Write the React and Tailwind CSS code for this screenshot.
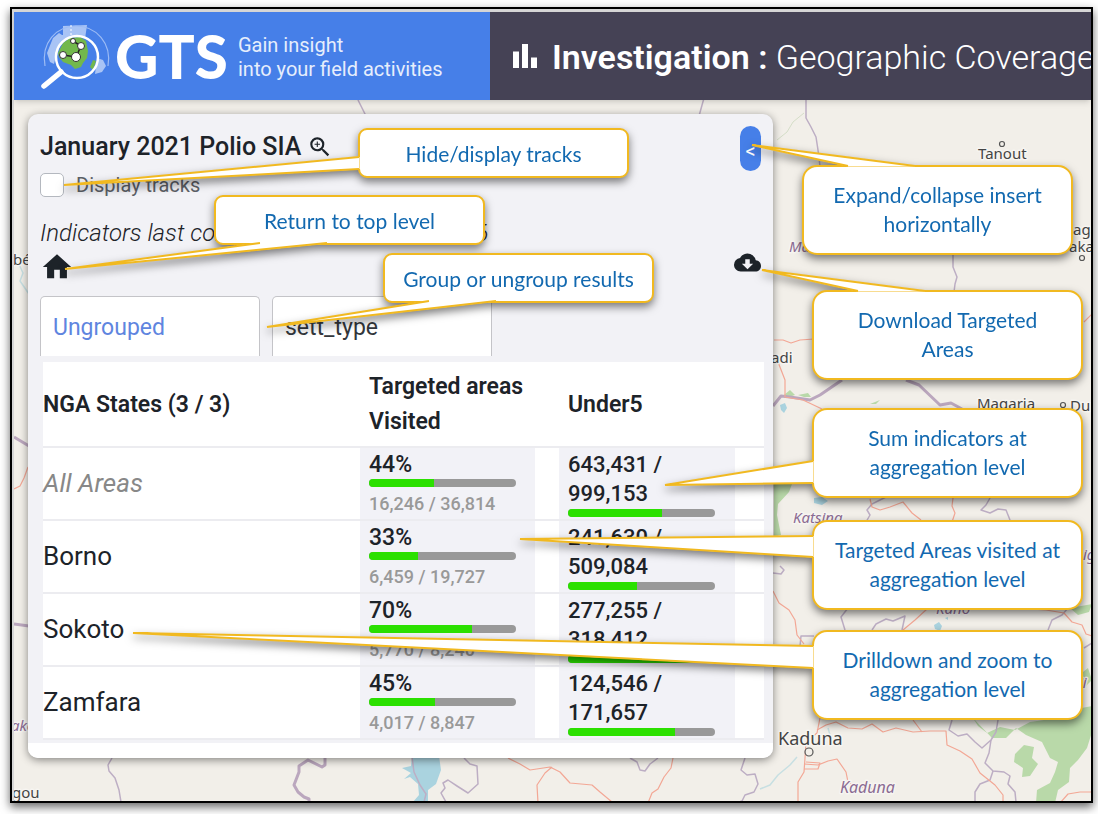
import clsx from "clsx";
import { MdBarChart, MdCloudDownload, MdHome, MdZoomIn } from "react-icons/md";

const rows = [
  { name: "All Areas", percent: 44, visited: "16,246", target: "36,814", under5: "643,431", total: "999,153", summary: true },
  { name: "Borno", percent: 33, visited: "6,459", target: "19,727", under5: "241,630", total: "509,084" },
  { name: "Sokoto", percent: 70, visited: "5,770", target: "8,240", under5: "277,255", total: "318,412" },
  { name: "Zamfara", percent: 45, visited: "4,017", target: "8,847", under5: "124,546", total: "171,657" },
];

// x / y is the corner of the box, tail is [base, tip, base] measured from that corner
const callouts = [
  { x: 358, y: 128, lines: ["Hide/display tracks"], tail: [[1, 29], [-294, 57], [1, 41]] },
  { x: 214, y: 195, lines: ["Return to top level"], tail: [[46, 48], [-149, 74], [113, 48]] },
  { x: 383, y: 253, lines: ["Group or ungroup results"], tail: [[46, 48], [-116, 74], [113, 48]] },
  { x: 802, y: 165, lines: ["Expand/collapse insert", "horizontally"], tail: [[46, 1], [-50, -20], [113, 1]] },
  { x: 812, y: 290, lines: ["Download Targeted", "Areas"], tail: [[46, 1], [-50, -20], [113, 1]] },
  { x: 812, y: 408, lines: ["Sum indicators at", "aggregation level"], tail: [[1, 53], [-147, 77], [1, 75]] },
  { x: 812, y: 520, lines: ["Targeted Areas visited at", "aggregation level"], tail: [[1, 16], [-292, 19], [1, 37]] },
  { x: 812, y: 630, lines: ["Drilldown and zoom to", "aggregation level"], tail: [[1, 16], [-679, 3], [1, 38]] },
];

const borders = [
  "358,100 366,116",
  "704,98 699,116",
  "806,98 806,118 811,127 816,137 818,150 820,166",
  "953,255 953,267 957,277 955,284 954,292",
  "866,522 870,515 867,510 872,504 886,497",
  "990,498 986,505 981,510 990,513 998,509 1006,510 1010,520",
  "773,573 781,574 784,570 780,566",
  "800,646 801,636 814,636",
  "848,608 841,617 845,630",
  "872,630 876,624 886,619 893,621 905,616 902,630",
  "1068,608 1062,615 1052,620 1048,630",
  "1084,648 1092,643",
  "952,720 949,730 958,736 967,734 975,742 982,748 991,740 996,732 998,720",
  "991,740 989,753 985,763 993,771 1004,772 1010,776 1008,784 1015,792 1016,802",
  "993,771 990,780 980,784 975,792 975,802",
  "412,757 414,772 420,785 426,794 424,802",
  "464,758 470,764 477,766 478,784 468,793 457,786 448,780 443,783 445,788 441,793 446,802",
  "630,758 637,762 640,770 645,771 650,764 658,758",
  "745,758 741,770 747,775 755,774 758,784 754,792 745,795 742,801 736,803",
  "112,758 108,765 109,771 115,778 119,790 121,802",
];

const thickBorders = [
  "773,406 781,396 790,397 810,400 820,395 842,380",
  "906,380 919,385 940,405 951,403 962,409",
  "325,758 325,765 322,767 308,760 299,766 299,772 294,785 298,792 304,797 309,799 309,803",
  "14,437 29,446",
  "14,624 29,626",
];

const roads = [
  "774,340 783,340 791,343 800,340 814,339",
  "778,362 785,380 785,397 803,400 822,409",
  "870,499 872,507 880,510 890,507 903,502 912,513 921,520",
  "953,498 952,506 955,513 952,522",
  "773,591 779,603 789,610 795,620 797,635 804,644",
  "927,609 915,620 903,630",
  "1030,609 1046,610 1064,613 1072,622 1082,625 1086,634 1092,636",
  "820,718 817,733 806,742 805,758 804,772 798,782 798,802",
  "817,730 826,725 836,722 848,728 862,729 872,724 883,732 896,728 913,732 930,731 946,731 947,745 960,751 972,759 980,773 995,785 1003,795 1003,803",
  "913,720 922,732",
  "804,764 818,765 828,761 837,759 846,772 848,782 858,788 870,787 875,793",
  "806,762 820,763 818,769 804,769",
  "508,758 520,764 530,770 550,767 560,772 570,783 592,785 600,792 612,802",
  "552,767 545,773 537,785 538,803",
  "673,758 671,768 664,777 658,789 652,793 648,803",
  "1060,803 1068,794 1080,792 1092,792",
  "28,467 24,478 20,486 14,489",
  "1084,322 1092,314",
];

const forests = [
  "774,482 792,484 789,492 778,504 777,515 781,535 774,537",
  "973,718 978,726 987,733 1000,727 1015,730 1030,722 1044,720 1060,712 1092,706 1092,732 1087,748 1078,760 1070,768 1069,782 1058,790 1055,803 1036,803 1037,790 1050,783 1055,772 1058,762 1050,758 1047,752 1042,742 1026,735 1016,728 1006,738 992,738",
  "1015,754 1024,745 1034,747 1032,758 1038,764 1030,776 1022,777 1023,768 1014,762",
  "1070,608 1092,604 1089,612 1078,615",
  "1083,672 1088,668 1092,680 1084,688",
  "784,395 790,390 795,395 789,397",
  "798,395 808,393 811,397 804,397",
  "870,404 880,400 876,404",
];

function Lines({ points, ...props }) {
  return (
    <g fill="none" strokeLinejoin="round" {...props}>
      {points.map((p) => (
        <polyline key={p} points={p} />
      ))}
    </g>
  );
}

function MapBackground() {
  return (
    <svg className="absolute inset-0 h-full w-full" aria-hidden="true">
      <g transform="translate(-14 -100)">
        <g fill="#b9d9a9">
          {forests.map((p) => (
            <polygon key={p} points={p} />
          ))}
        </g>
        <g fill="#aad3df">
          <path d="M412 756H439L441 770L436 784L428 790L428 802H413L419 795L418 784L410 777L404 779L411 773L402 768L411 766Z" />
          <path d="M780 405l5-2 2 5-3 5-3-3z" />
          <path d="M814 498l8-1 6 4-6 4-8-2z" />
          <path d="M934 625l5-3 3 4-2 5-5-2zM945 618l3-1 0 3z" />
        </g>
        <Lines points={["18,262 23,273 20,281 29,294", "760,789 770,785 778,775 790,765 797,757", "828,728 830,735"]} stroke="#c7dfe2" strokeWidth="1.5" />
        <Lines points={["777,140 787,132 793,122 804,113"]} stroke="#d5dec8" />
        <Lines points={borders} stroke="#bdaec4" strokeWidth="1.5" />
        <Lines points={thickBorders} stroke="#bba7be" strokeWidth="3" />
        <Lines points={roads} stroke="#f3a795" strokeWidth="1.2" />
        <g fill="#f2efe9" stroke="#555" strokeWidth="1.2">
          <circle cx="1002" cy="144" r="2.5" />
          <circle cx="1082" cy="258" r="2.5" />
          <circle cx="1063" cy="405" r="2.5" />
          <circle cx="809" cy="752" r="4" />
        </g>
        <g
          fill="#444"
          stroke="#f7f5f1"
          strokeWidth="3"
          strokeLinejoin="round"
          className="font-['Noto_Sans',sans-serif] text-[15px] [paint-order:stroke]"
        >
          <text x="978" y="159">Tanout</text>
          <text x="1073" y="235">aga</text>
          <text x="1069" y="252">aka</text>
          <text x="771" y="363">adi</text>
          <text x="977" y="409">Magaria</text>
          <text x="1070" y="411">Dun</text>
          <text x="778" y="745" className="text-[18px]">Kaduna</text>
          <text x="12" y="798">gou</text>
          <text x="13" y="265">bé</text>
        </g>
        <g
          fill="#8b6b93"
          stroke="#f7f5f1"
          strokeWidth="3"
          strokeLinejoin="round"
          className="font-['Noto_Sans',sans-serif] text-[15px] italic [paint-order:stroke]"
        >
          <text x="789" y="252">Ma</text>
          <text x="793" y="523">Katsina</text>
          <text x="936" y="614">Kano</text>
          <text x="1083" y="560">ig</text>
          <text x="840" y="793" className="text-[16px]">Kaduna</text>
          <text x="11" y="731">ako</text>
          <text x="1079" y="688">ji</text>
        </g>
      </g>
    </svg>
  );
}

function Logo() {
  return (
    <svg width="72" height="66" viewBox="0 0 72 66" fill="none" aria-hidden="true">
      <path d="M12 15l6-5 3 2 8-2 0 8-8 4-2 8-4 3-2 8-4-2-3-9zM22 3l24-1-2 14-10-3-12 1z" fill="#a9c4f5" />
      <path d="M56 35l6 2 3 6-4 6-7 2z" fill="#a9c4f5" />
      <path d="M4 43C0 20 15 3 35 3s36 17 32 40" stroke="#9dbcf5" strokeWidth="1.2" />
      <path d="M30 2v12" stroke="#fff" strokeDasharray="2 2" />
      <circle cx="36" cy="34" r="20" fill="#467fe8" />
      <path d="M17 30l5-10 7-5 10-1 6 4 2 10-1 7-4 5-2 4-6 2-4-4-8-3-4-5z" fill="#72b84c" />
      <path d="M52 37l3 1-3 9-3-3z" fill="#72b84c" />
      <circle cx="36" cy="34" r="21" stroke="#fff" strokeWidth="2.5" />
      <path d="M20 49L3 63" stroke="#fff" strokeWidth="5.5" strokeLinecap="round" />
      <path d="M32 18l8 5-5 11-13-2" stroke="#222" strokeWidth="1.5" />
      <g fill="#fff" stroke="#333">
        <circle cx="32" cy="18" r="2.5" />
        <circle cx="40" cy="23" r="3.5" />
        <circle cx="22" cy="32" r="3.5" />
        <circle cx="35" cy="34" r="4.5" />
      </g>
    </svg>
  );
}

function Header() {
  return (
    <header className="relative z-10 flex h-[88px] text-white shadow-md">
      <div className="flex w-[476px] shrink-0 items-center bg-[#467fe8] pl-[27px]">
        <Logo />
        <span className="ml-[2px] w-[123px] font-['Lato',sans-serif] text-[60px] leading-none font-black">GTS</span>
        <p className="pt-[2px] text-[20px] leading-[24px] whitespace-nowrap text-[#e6eefc]">
          Gain insight
          <br />
          into your field activities
        </p>
      </div>
      <div className="flex min-w-0 flex-1 items-center overflow-hidden bg-[#454255] pl-[17px]">
        <MdBarChart size={36} className="shrink-0" />
        <h1 className="ml-[9px] pt-[2px] text-[34px] leading-none font-light whitespace-nowrap">
          <span className="font-semibold">Investigation :</span> Geographic Coverage
        </h1>
      </div>
    </header>
  );
}

function Bar({ label, value }) {
  return (
    <div role="progressbar" aria-label={label} aria-valuenow={value} className="h-2 w-[147px] overflow-hidden rounded-full bg-[#999]">
      <div className="h-full bg-[#2be000]" style={{ width: `${value}%` }} />
    </div>
  );
}

const toNumber = (s) => Number(s.replace(",", ""));

function ResultsTable() {
  return (
    <div className="ml-[15px] mr-[9px] mt-[6px] bg-white">
      <table className="w-full table-fixed border-collapse text-left text-[#1d2329]">
        <colgroup>
          <col />
          <col className="w-[199px]" />
          <col className="w-[205px]" />
        </colgroup>
        <thead>
          <tr className="h-[85px] border-b-2 border-[#ececf0] text-[23px] leading-[35px]">
            <th className="font-semibold">NGA States (3 / 3)</th>
            <th className="pl-[9px] font-semibold">Targeted areas Visited</th>
            <th className="pl-[9px] font-semibold">Under5</th>
          </tr>
        </thead>
        <tbody>
          {rows.map((row) => (
            <tr key={row.name} className="border-b-2 border-[#ececf0]">
              <td className={clsx("text-[26px]", row.summary && "text-[#888] italic")}>{row.name}</td>
              <td className="pr-6">
                <div className="h-[71px] bg-[#f2f2f7] pl-[9px]">
                  <p className="pt-[2px] text-[23px] leading-[29px] font-medium">{row.percent}%</p>
                  <Bar label={`${row.name} targeted areas visited`} value={row.percent} />
                  <p className="pt-[2px] text-[18px] leading-[29px] font-medium text-[#999]">
                    {row.visited} / {row.target}
                  </p>
                </div>
              </td>
              <td className="pr-[29px]">
                <div className="h-[71px] bg-[#f2f2f7] pl-[9px]">
                  <p className="pt-[2px] pb-[1px] text-[22px] leading-[29px] font-medium">
                    {row.under5} /
                    <br />
                    {row.total}
                  </p>
                  <Bar label={`${row.name} under 5`} value={Math.round((toNumber(row.under5) / toNumber(row.total)) * 100)} />
                </div>
              </td>
            </tr>
          ))}
        </tbody>
      </table>
    </div>
  );
}

function Panel() {
  return (
    <section className="relative w-[745px] max-w-full overflow-hidden rounded-[10px] bg-[#f2f2f6] pt-3 text-[#1d2329] shadow-[0_2px_8px_rgba(0,0,0,0.45)]">
      <div className="pl-3 pr-3">
        <div className="flex items-start justify-between pb-[2px]">
          <h2 className="flex items-center gap-[6px] pt-[5px] text-[25px] leading-8 font-medium">
            January 2021 Polio SIA
            <button aria-label="Zoom to campaign">
              <MdZoomIn size={26} />
            </button>
          </h2>
          <button aria-label="Collapse panel" className="h-[45px] w-[21px] rounded-full bg-[#467fe8] pt-1 text-[20px] text-white">
            &lt;
          </button>
        </div>
        <label className="flex h-6 items-center gap-3 text-[20px] text-[#5c6066]">
          <input type="checkbox" className="h-6 w-6 appearance-none rounded-[5px] border border-[#b4b8bf] bg-white" />
          Display tracks
        </label>
        <p className="mt-5 text-[24px] leading-8 font-light whitespace-nowrap italic">
          Indicators last computed: 2021-02-16, 14:06
        </p>
        <div className="mt-[2px] flex h-[31px] items-center justify-between">
          <button aria-label="Return to top level">
            <MdHome size={34} />
          </button>
          <button aria-label="Download targeted areas" className="pb-2">
            <MdCloudDownload size={27} />
          </button>
        </div>
        <div className="mt-[14px] flex gap-3">
          <button className="h-[60px] w-[220px] rounded-t-[5px] border border-b-0 border-[#c4c4c8] bg-white px-3 pt-1 text-left text-[23px] text-[#5f85df]">
            Ungrouped
          </button>
          <button className="h-[60px] w-[220px] rounded-t-[5px] border border-b-0 border-[#c4c4c8] bg-white px-3 pt-1 text-left text-[23px] text-[#33373c]">
            sett_type
          </button>
        </div>
      </div>
      <ResultsTable />
      <div className="mt-[3px] h-[15px] bg-white" />
    </section>
  );
}

function Callout({ x, y, lines, tail }) {
  const tall = lines.length > 1;
  const points = tail.map((p) => p.join(",")).join(" ");
  return (
    <div className="absolute drop-shadow-[0_4px_4px_rgba(0,0,0,0.5)]" style={{ left: x, top: y }}>
      <div
        className={clsx(
          "flex w-[271px] flex-col items-center justify-center border-2 border-[#f1b920] bg-white text-center font-['Lato',sans-serif] text-[21px] leading-[29px] text-[#1269b0]",
          tall ? "h-[90px] rounded-[15px] pb-[2px]" : "h-[50px] rounded-[9px]",
        )}
      >
        {lines.map((line) => (
          <span key={line}>{line}</span>
        ))}
      </div>
      <svg width="1" height="1" className="absolute top-0 left-0 overflow-visible" aria-hidden="true">
        <polygon points={points} fill="#fff" stroke="#fff" />
        <polyline points={points} fill="none" stroke="#f1b920" strokeWidth="2" strokeLinejoin="bevel" />
      </svg>
    </div>
  );
}

export default function App() {
  return (
    <div className="relative overflow-hidden bg-white pt-[7px] pr-[5px] pb-[11px] pl-[10px] font-['Roboto',sans-serif]">
      <main className="overflow-hidden border-2 border-black bg-[#d6d6d6] pt-[3px] pl-[2px] shadow-[0_4px_9px_rgba(0,0,0,0.6)]">
        <Header />
        <div className="relative overflow-hidden bg-[#f2efe9] pt-[14px] pb-[43px] pl-[14px]">
          <MapBackground />
          <Panel />
        </div>
      </main>
      {callouts.map((callout) => (
        <Callout key={callout.lines[0]} {...callout} />
      ))}
    </div>
  );
}
